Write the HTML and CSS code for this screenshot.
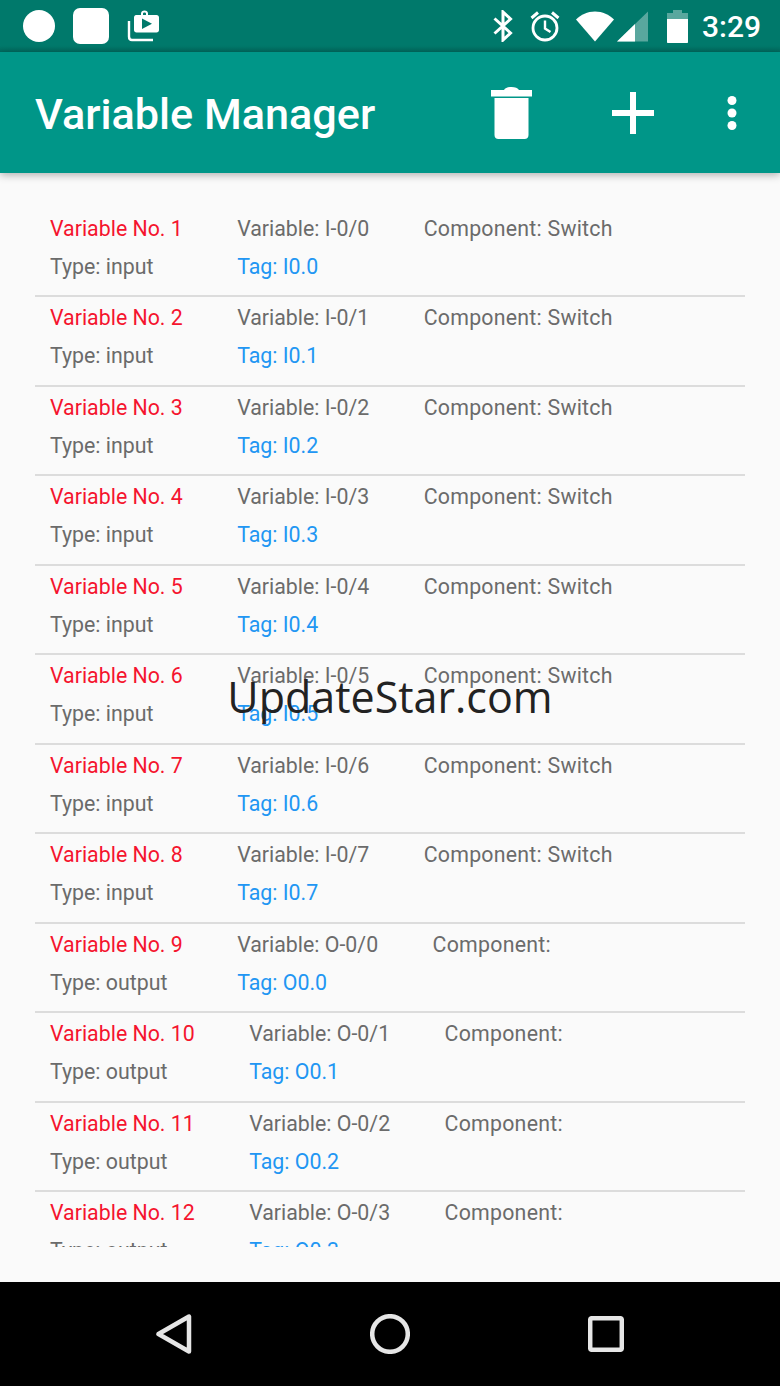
FILE: index.html
```html
<!DOCTYPE html>
<html lang="en">
<head>
    <meta charset="UTF-8">
    <meta name="viewport" content="width=device-width, initial-scale=1.0">
    <title>Variable Manager</title>
    <link rel="stylesheet" href="styles.css">
</head>
<body>
    <div class="phone">
        <div class="status-bar">
            <div class="status-left">
                <span class="dot-icon"></span>
                <span class="square-icon"></span>
                <svg class="store-icon" viewBox="0 0 32 32" width="32" height="32">
                    <path fill="#fff" d="M9 5h5V3.500C14 1.600 15.500 0.500 17.500 0.500S21 1.600 21 3.500V5h8.500C31 5 32 6 32 7.500V20c0 1.500-1 2.500-2.500 2.500H9.500C8 22.500 7 21.500 7 20V7.500C7 6 8 5 9 5zM16 5h3V3.500C19 2.800 18.300 2.400 17.500 2.400S16 2.800 16 3.500V5z"/>
                    <path fill="#00796b" d="M15 8.500v10.500l10-5.200z"/>
                    <path fill="none" stroke="#fff" stroke-width="2.400" d="M2 11v15.500C2 28.500 3 30 5 30h21"/>
                </svg>
            </div>
            <div class="status-right">
                <svg viewBox="0 0 20 32" width="20" height="32">
                    <path fill="none" stroke="#fff" stroke-width="3" d="M1.500 8.500l16 14.500-7.500 7V2l7.500 7-16 14.500"/>
                </svg>
                <svg class="alarm" viewBox="0 0 30 32" width="30" height="32">
                    <circle cx="15" cy="18" r="12" fill="none" stroke="#fff" stroke-width="2.800"/>
                    <path fill="none" stroke="#fff" stroke-width="2.400" d="M15 10.500V18.500l5.500 3.500"/>
                    <path fill="none" stroke="#fff" stroke-width="3" d="M1.500 8L8 2.500M28.500 8L22 2.500"/>
                </svg>
                <svg class="wifi" viewBox="0 0 38 31" width="38" height="31">
                    <path fill="#fff" d="M19 30.500L0 8.500C5 3.500 11.500 0.500 19 0.500S33 3.500 38 8.500z"/>
                </svg>
                <svg class="signal" viewBox="0 0 31 31" width="31" height="31">
                    <path fill="#fff" fill-opacity="0.35" d="M31 0.500V30.500H0z"/>
                    <path fill="#fff" d="M18 13V30.500H0z"/>
                </svg>
                <svg class="battery" viewBox="0 0 21 33" width="21" height="33">
                    <path fill="#fff" fill-opacity="0.35" d="M6 0h9v3h6v10H0V3h6z"/>
                    <path fill="#fff" d="M0 9h21v23c0 .6-.4 1-1 1H1c-.6 0-1-.4-1-1z"/>
                </svg>
                <span class="clock">3:29</span>
            </div>
        </div>

        <div class="app-bar">
            <h1>Variable Manager</h1>
            <svg class="trash" viewBox="0 0 41 52" width="41" height="52">
                <path fill="#fff" d="M0 3h13C14 1 17 0 20.500 0S27 1 28 3h13v6.500H0zM3.500 11h34v37c0 2.500-1.500 4-4 4H7.500c-2.500 0-4-1.500-4-4z"/>
            </svg>
            <svg class="plus" viewBox="0 0 42 42" width="42" height="42">
                <path fill="#fff" d="M18 0h6v18h18v6H24v18h-6V24H0v-6h18z"/>
            </svg>
            <svg class="more" viewBox="0 0 10 34" width="10" height="34">
                <circle cx="5" cy="4.500" r="4.500" fill="#fff"/>
                <circle cx="5" cy="17" r="4.500" fill="#fff"/>
                <circle cx="5" cy="29.500" r="4.500" fill="#fff"/>
            </svg>
        </div>

        <div class="content">
            <div class="list">
                <div class="row">
                    <div class="col"><span class="name">Variable No. 1</span><span>Type: input</span></div>
                    <div class="col"><span>Variable: I-0/0</span><span class="tag">Tag: I0.0</span></div>
                    <div class="col comp">Component: Switch</div>
                </div>
                <div class="row">
                    <div class="col"><span class="name">Variable No. 2</span><span>Type: input</span></div>
                    <div class="col"><span>Variable: I-0/1</span><span class="tag">Tag: I0.1</span></div>
                    <div class="col comp">Component: Switch</div>
                </div>
                <div class="row">
                    <div class="col"><span class="name">Variable No. 3</span><span>Type: input</span></div>
                    <div class="col"><span>Variable: I-0/2</span><span class="tag">Tag: I0.2</span></div>
                    <div class="col comp">Component: Switch</div>
                </div>
                <div class="row">
                    <div class="col"><span class="name">Variable No. 4</span><span>Type: input</span></div>
                    <div class="col"><span>Variable: I-0/3</span><span class="tag">Tag: I0.3</span></div>
                    <div class="col comp">Component: Switch</div>
                </div>
                <div class="row">
                    <div class="col"><span class="name">Variable No. 5</span><span>Type: input</span></div>
                    <div class="col"><span>Variable: I-0/4</span><span class="tag">Tag: I0.4</span></div>
                    <div class="col comp">Component: Switch</div>
                </div>
                <div class="row">
                    <div class="col"><span class="name">Variable No. 6</span><span>Type: input</span></div>
                    <div class="col"><span>Variable: I-0/5</span><span class="tag">Tag: I0.5</span></div>
                    <div class="col comp">Component: Switch</div>
                </div>
                <div class="row">
                    <div class="col"><span class="name">Variable No. 7</span><span>Type: input</span></div>
                    <div class="col"><span>Variable: I-0/6</span><span class="tag">Tag: I0.6</span></div>
                    <div class="col comp">Component: Switch</div>
                </div>
                <div class="row">
                    <div class="col"><span class="name">Variable No. 8</span><span>Type: input</span></div>
                    <div class="col"><span>Variable: I-0/7</span><span class="tag">Tag: I0.7</span></div>
                    <div class="col comp">Component: Switch</div>
                </div>
                <div class="row">
                    <div class="col"><span class="name">Variable No. 9</span><span>Type: output</span></div>
                    <div class="col"><span>Variable: O-0/0</span><span class="tag">Tag: O0.0</span></div>
                    <div class="col comp">Component:</div>
                </div>
                <div class="row">
                    <div class="col"><span class="name">Variable No. 10</span><span>Type: output</span></div>
                    <div class="col"><span>Variable: O-0/1</span><span class="tag">Tag: O0.1</span></div>
                    <div class="col comp">Component:</div>
                </div>
                <div class="row">
                    <div class="col"><span class="name">Variable No. 11</span><span>Type: output</span></div>
                    <div class="col"><span>Variable: O-0/2</span><span class="tag">Tag: O0.2</span></div>
                    <div class="col comp">Component:</div>
                </div>
                <div class="row">
                    <div class="col"><span class="name">Variable No. 12</span><span>Type: output</span></div>
                    <div class="col"><span>Variable: O-0/3</span><span class="tag">Tag: O0.3</span></div>
                    <div class="col comp">Component:</div>
                </div>
            </div>
            <div class="watermark">UpdateStar.com</div>
        </div>

        <div class="nav-bar">
            <svg viewBox="0 0 36 40" width="36" height="40">
                <path fill="none" stroke="#e6e6e6" stroke-width="4.500" stroke-linejoin="round" d="M33 2.500V37.500L2.500 20z"/>
            </svg>
            <svg viewBox="0 0 40 40" width="40" height="40">
                <circle cx="20" cy="20" r="17.800" fill="none" stroke="#e6e6e6" stroke-width="4.500"/>
            </svg>
            <svg viewBox="0 0 36 36" width="36" height="36">
                <rect x="2.200" y="2.200" width="31.600" height="31.600" rx="1.500" fill="none" stroke="#e6e6e6" stroke-width="4.500"/>
            </svg>
        </div>
    </div>
</body>
</html>
```

FILE: styles.css
```css
html, body {
    margin: 0;
    padding: 0;
}
body {
    font-family: Roboto, "Liberation Sans", sans-serif;
}
.phone {
    position: relative;
    width: 780px;
    height: 1386px;
    display: flex;
    flex-direction: column;
    overflow: hidden;
    background-color: #fafafa;
}

/* status bar */
.status-bar {
    height: 52px;
    flex: none;
    display: flex;
    justify-content: space-between;
    align-items: center;
    padding: 0 19px 0 23px;
    background: linear-gradient(#00796b, #00796b 88%, #006a5e);
}
.status-left {
    display: flex;
    align-items: center;
}
.dot-icon {
    width: 32px;
    height: 32px;
    border-radius: 50%;
    background-color: #fff;
}
.square-icon {
    width: 36px;
    height: 36px;
    margin-left: 18px;
    border-radius: 7px;
    background-color: #fff;
}
.store-icon {
    margin-left: 18px;
}
.status-right {
    display: flex;
    align-items: center;
}
.alarm {
    margin-left: 17px;
}
.wifi {
    margin-left: 16px;
}
.signal {
    margin-left: 3px;
}
.battery {
    margin-left: 19px;
}
.clock {
    margin-left: 14px;
    font-size: 30px;
    font-weight: 500;
    color: #fff;
}

/* app bar */
.app-bar {
    position: relative;
    height: 121px;
    flex: none;
    display: flex;
    align-items: center;
    padding: 0 43px 0 35px;
    background-color: #009688;
    box-shadow: 0 2px 8px rgba(0, 0, 0, 0.3);
}
.app-bar h1 {
    flex: 1;
    margin: 3px 0 0;
    font-size: 43.2px;
    font-weight: 500;
    color: #fff;
}
.plus {
    margin-left: 80px;
}
.more {
    margin-left: 73px;
}

/* list */
.content {
    flex: 1;
    min-height: 0;
}
.list {
    height: 1039px;
    margin: 0 35px;
    padding-top: 34.5px;
    overflow: hidden;
}
.row {
    display: flex;
    box-sizing: border-box;
    height: 89.5px;
    padding-left: 15px;
    padding-top: 2px;
    border-bottom: 2px solid #dcdcdc;
    font-size: 21.33px;
    line-height: 38px;
    color: #6b6b6b;
}
.col {
    display: flex;
    flex-direction: column;
    padding-right: 54.4px;
}
.comp {
    display: block;
    letter-spacing: 0.24px;
}
.name {
    color: #f5142e;
}
.tag {
    color: #2196f3;
}
.watermark {
    position: absolute;
    top: 667px;
    left: 0;
    right: 0;
    text-align: center;
    font-family: "Open Sans", sans-serif;
    font-size: 43px;
    line-height: 60px;
    color: #222;
}

/* nav bar */
.nav-bar {
    height: 104px;
    flex: none;
    display: flex;
    justify-content: center;
    align-items: center;
    gap: 178px;
    background-color: #000;
}
```
